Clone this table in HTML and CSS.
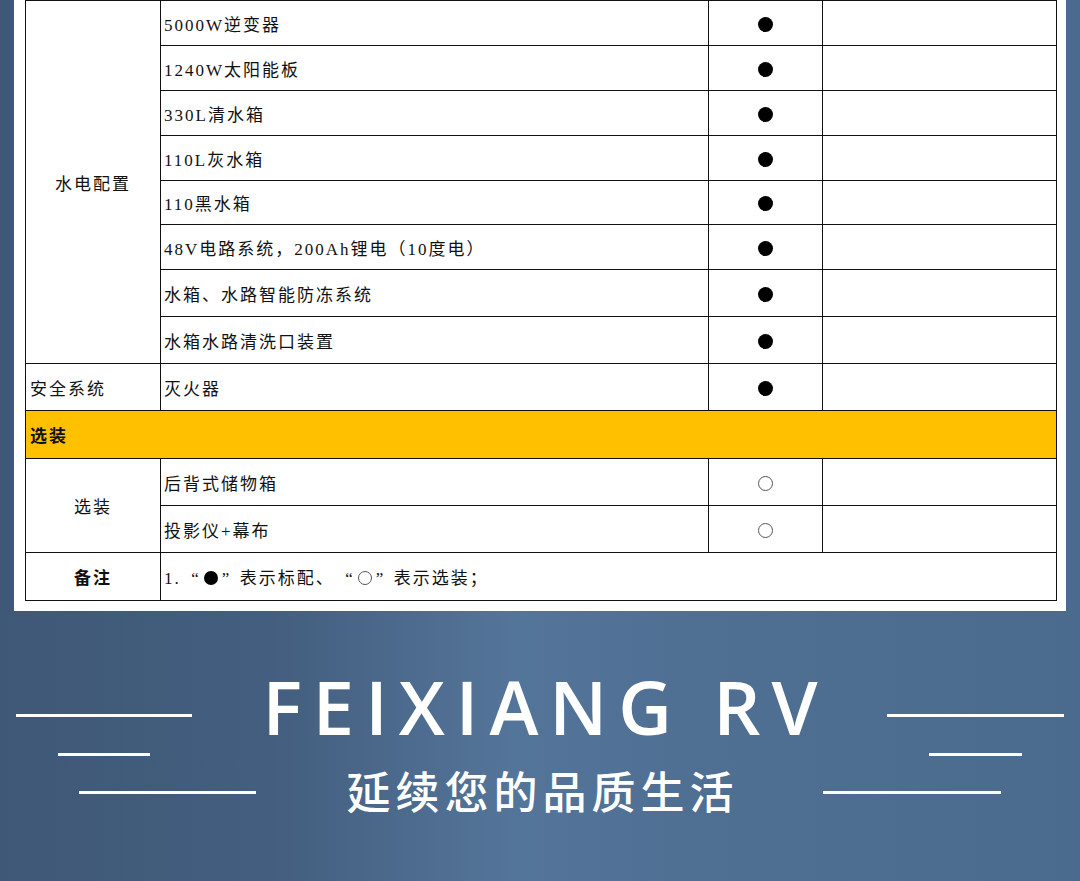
FILE: index.html
```html
<!DOCTYPE html>
<html lang="zh-CN">
<head>
<meta charset="utf-8">
<title>FEIXIANG RV 配置表</title>
<link rel="stylesheet" href="styles.css">
</head>
<body>
<div class="panel">
  <table class="spec">
    <colgroup><col class="c1"><col class="c2"><col class="c3"><col class="c4"></colgroup>
    <tbody>
      <tr class="h45"><td class="cat" rowspan="8">水电配置</td><td class="item">5000W逆变器</td><td class="mark"><span class="dot"></span></td><td></td></tr>
      <tr class="h45"><td class="item">1240W太阳能板</td><td class="mark"><span class="dot"></span></td><td></td></tr>
      <tr class="h45"><td class="item">330L清水箱</td><td class="mark"><span class="dot"></span></td><td></td></tr>
      <tr class="h45"><td class="item">110L灰水箱</td><td class="mark"><span class="dot"></span></td><td></td></tr>
      <tr class="h44"><td class="item">110黑水箱</td><td class="mark"><span class="dot"></span></td><td></td></tr>
      <tr class="h45"><td class="item">48V电路系统，200Ah锂电（10度电）</td><td class="mark"><span class="dot"></span></td><td></td></tr>
      <tr class="h47"><td class="item">水箱、水路智能防冻系统</td><td class="mark"><span class="dot"></span></td><td></td></tr>
      <tr class="h47"><td class="item">水箱水路清洗口装置</td><td class="mark"><span class="dot"></span></td><td></td></tr>
      <tr class="h47"><td class="cat left">安全系统</td><td class="item">灭火器</td><td class="mark"><span class="dot"></span></td><td></td></tr>
      <tr class="h48 section"><td colspan="4" class="sec-title">选装</td></tr>
      <tr class="h47"><td class="cat" rowspan="2">选装</td><td class="item">后背式储物箱</td><td class="mark"><span class="ring"></span></td><td></td></tr>
      <tr class="h47"><td class="item">投影仪+幕布</td><td class="mark"><span class="ring"></span></td><td></td></tr>
      <tr class="h48"><td class="cat bold">备注</td><td class="item note" colspan="3">1.<span class="q open">“</span><span class="dot small"></span><span class="q close">”</span>表示标配、<span class="q open">“</span><span class="ring small"></span><span class="q close">”</span>表示选装；</td></tr>
    </tbody>
  </table>
</div>
<footer class="brand">
  <div class="lines lines-left">
    <span class="line l1"></span>
    <span class="line l2"></span>
    <span class="line l3"></span>
  </div>
  <div class="slogan">
    <div class="en">FEIXIANG RV</div>
    <div class="zh">延续您的品质生活</div>
  </div>
  <div class="lines lines-right">
    <span class="line r1"></span>
    <span class="line r2"></span>
    <span class="line r3"></span>
  </div>
</footer>
</body>
</html>
```

FILE: styles.css
```css
html, body {
  margin: 0;
  padding: 0;
}
body {
  width: 1080px;
  height: 881px;
  overflow: hidden;
  background: linear-gradient(90deg, #3f5878 0%, #435e7e 25%, #54759a 48%, #4f6f93 62%, #4a6a8e 100%);
}
.panel {
  width: 1052px;
  margin-left: 14px;
  box-sizing: border-box;
  padding: 0 10px 10px 11px;
  background: #fff;
}
.spec {
  width: 1031px;
  table-layout: fixed;
  border-collapse: collapse;
  font-family: "Liberation Serif", "Noto Sans CJK SC", serif;
  font-size: 17px;
  letter-spacing: 2px;
  color: #111;
}
.c1 { width: 135px; }
.c2 { width: 548px; }
.c3 { width: 114px; }
.c4 { width: 234px; }
.spec td {
  border: 1px solid #111;
  padding: 0;
  vertical-align: middle;
  white-space: nowrap;
}
.h44 td { height: 43px; }
.h45 td { height: 44px; }
.h47 td { height: 46px; }
.h48 td { height: 47px; }
.cat {
  text-align: center;
}
.cat.left {
  text-align: left;
  padding-left: 4px !important;
}
.bold {
  font-weight: 700;
}
.item {
  padding-left: 3px !important;
}
.mark {
  text-align: center;
}
.section td {
  background: #ffc000;
}
.sec-title {
  padding-left: 4px !important;
  font-weight: 700;
}
.dot {
  display: inline-block;
  width: 15px;
  height: 15px;
  border-radius: 50%;
  background: #000;
  vertical-align: middle;
}
.ring {
  display: inline-block;
  width: 13px;
  height: 13px;
  border: 1px solid #555;
  border-radius: 50%;
  vertical-align: middle;
}
.dot.small {
  width: 14px;
  height: 14px;
  margin: 0 4px 0 5px;
  vertical-align: -1px;
}
.ring.small {
  width: 12px;
  height: 12px;
  margin: 0 4px 0 5px;
  vertical-align: -1px;
}
.q {
  font-family: "Liberation Serif", serif;
  letter-spacing: 0;
  display: inline-block;
  width: 18px;
}
.q.open {
  text-align: right;
}
.q.close {
  text-align: left;
}

/* footer */
.brand {
  height: 271px;
  display: flex;
  color: #fff;
}
.lines {
  width: 262px;
  flex: none;
  display: flex;
  flex-direction: column;
  padding-top: 103px;
  box-sizing: border-box;
}
.line {
  display: block;
  height: 3px;
  background: #fff;
}
.l1 { width: 176px; margin-left: 16px; }
.l2 { width: 92px; margin-left: 58px; margin-top: 36px; }
.l3 { width: 177px; margin-left: 79px; margin-top: 35px; }
.r1 { width: 177px; margin-left: 69px; }
.r2 { width: 93px; margin-left: 111px; margin-top: 36px; }
.r3 { width: 178px; margin-left: 5px; margin-top: 35px; }
.slogan {
  flex: 1;
  min-width: 0;
  display: flex;
  flex-direction: column;
  align-items: center;
  padding-top: 59px;
  white-space: nowrap;
}
.en {
  font-family: "Open Sans", "Noto Sans", sans-serif;
  font-weight: 600;
  font-size: 74px;
  line-height: 74px;
  letter-spacing: 11px;
  text-indent: 11px;
}
.zh {
  font-family: "Noto Sans CJK SC", sans-serif;
  font-weight: 500;
  font-size: 44px;
  line-height: 44px;
  letter-spacing: 5px;
  text-indent: 5px;
  margin-top: 24px;
}
```
